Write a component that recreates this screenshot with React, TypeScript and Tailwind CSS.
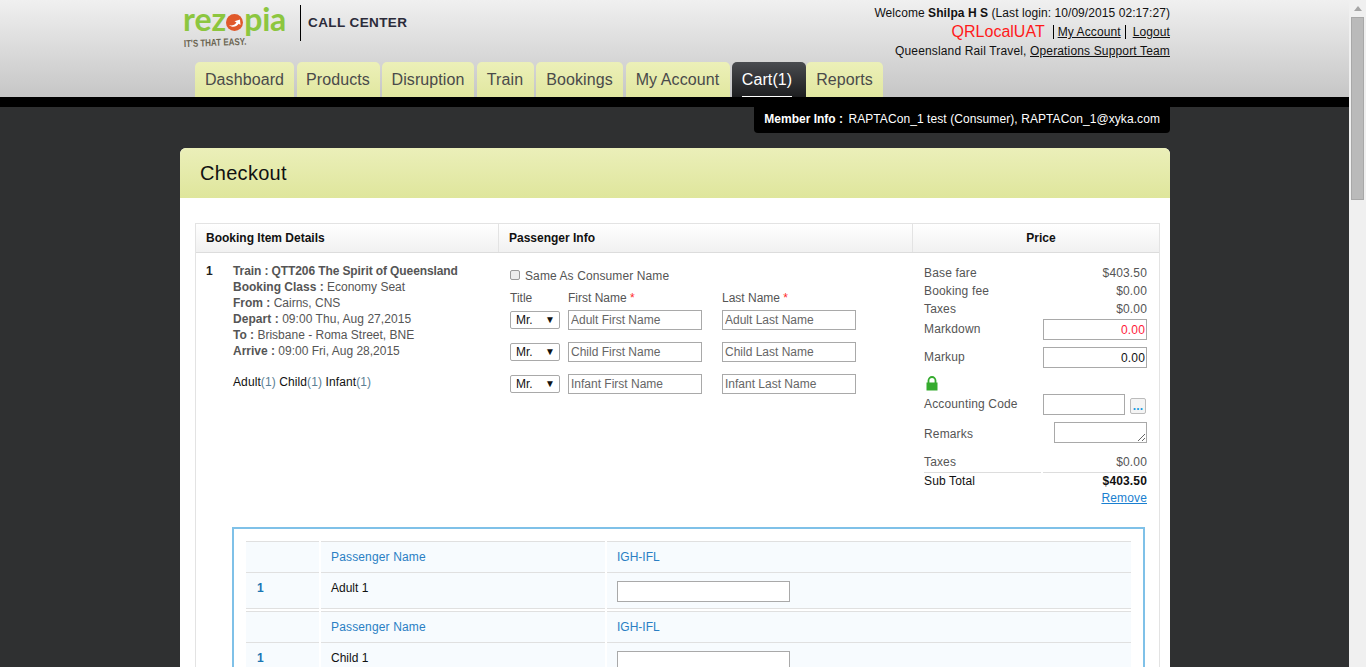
const tabs = [
  { label: "Dashboard", width: "w-[99px]" },
  { label: "Products", width: "w-[83px]" },
  { label: "Disruption", width: "w-[92px]" },
  { label: "Train", width: "w-[57px]" },
  { label: "Bookings", width: "w-[87px]" },
  { label: "My Account", width: "w-[104px]" },
];

function Logo() {
  return (
    <div className="w-[120px] shrink-0 pt-[3px] pl-[3px]">
      <div className="flex items-center h-[32px] font-['Lato',sans-serif] font-bold text-[32px] leading-none text-[#8cc63f]">
        <span>rez</span>
        <svg width="17" height="17" viewBox="0 0 17 17" className="mt-[6px] shrink-0">
          <circle cx="8.5" cy="8.5" r="8.5" fill="#e0592a" />
          <path d="M3 11C5.5 12 9 11 10.5 8.5L8.5 7.2L14 5.5L14.5 11L12.7 9.8C10.5 13 6 14 3 11Z" fill="#fff" />
        </svg>
        <span className="ml-[1px] -tracking-[0.3px]">pia</span>
      </div>
      <div className="mt-[3px] pl-[1px] w-[80px] text-[10px] leading-[12px] font-bold whitespace-nowrap text-[#6b6552] origin-left -rotate-2 scale-x-[0.8]">
        IT'S THAT EASY.
      </div>
    </div>
  );
}

function Header() {
  return (
    <div className="h-[97px] bg-gradient-to-b from-[#f0f0f0] to-[#c6c6c6]">
      <div className="w-[990px] ml-[180px]">
        <div className="flex justify-between h-[62px]">
          <div className="flex">
            <Logo />
            <div className="w-px h-[36px] mt-[5px] bg-black" />
            <div className="ml-[7px] mt-[15px] text-[13.5px] leading-[16px] font-bold tracking-[0.4px] text-[#2b2b3a]">
              CALL CENTER
            </div>
          </div>
          <div className="pt-[5px] text-right text-[12px] text-[#111]">
            <div className="leading-[16px] tracking-[0.07px]">
              Welcome <b>Shilpa H S</b> (Last login: 10/09/2015 02:17:27)
            </div>
            <div className="flex justify-end items-center h-[22px] tracking-[0.1px]">
              <span className="text-[16px] text-[#ff1a1a] mr-[8px] tracking-normal">QRLocalUAT</span>
              <span className="border-l border-black pl-[4px] h-[14px] leading-[15px] underline">My Account</span>
              <span className="border-l border-black ml-[4px] h-[14px] leading-[15px] pl-[7px] underline">Logout</span>
            </div>
            <div className="leading-[16px] tracking-[0.15px]">
              Queensland Rail Travel, <span className="underline">Operations Support Team</span>
            </div>
          </div>
        </div>
        <div className="flex h-[35px] pl-[15px] gap-[2.5px] text-[16px] tracking-[0.1px] text-center">
          {tabs.map((t) => (
            <div
              key={t.label}
              className={`${t.width} pt-[6px] rounded-t-[5px] bg-gradient-to-b from-[#ecf0b8] to-[#e1e7a0] text-[#4a4a4a] whitespace-nowrap`}
            >
              {t.label}
            </div>
          ))}
          <div className="relative w-[74px] pt-[6px] pr-[4px] rounded-t-[5px] bg-gradient-to-b from-[#4a4c50] to-[#1d1e20] text-white whitespace-nowrap">
            Cart(1)
            <div className="absolute left-[10px] right-[14px] bottom-0 h-px bg-white" />
          </div>
          <div className="-ml-[2.5px] w-[77px] pt-[6px] rounded-t-[5px] bg-gradient-to-b from-[#ecf0b8] to-[#e1e7a0] text-[#4a4a4a]">
            Reports
          </div>
        </div>
      </div>
    </div>
  );
}

function NameRow({ who }: { who: string }) {
  return (
    <div className="flex items-center h-[20px] mb-[12px]">
      <div className="flex justify-between items-center w-[50px] h-[18px] pl-[5px] pr-[4px] border border-[#a9a9a9] rounded-[2px] bg-white text-[#111]">
        <span>Mr.</span>
        <span className="text-[10px]">▼</span>
      </div>
      <input
        placeholder={`${who} First Name`}
        className="ml-[8px] w-[134px] h-[20px] px-[2px] border border-[#a9a9a9] text-[12px] placeholder:text-[#666] outline-none"
      />
      <input
        placeholder={`${who} Last Name`}
        className="ml-[20px] w-[134px] h-[20px] px-[2px] border border-[#a9a9a9] text-[12px] placeholder:text-[#666] outline-none"
      />
    </div>
  );
}

function PriceRow({ label, value }: { label: string; value: string }) {
  return (
    <div className="flex justify-between h-[18px] leading-[18px]">
      <span>{label}</span>
      <span>{value}</span>
    </div>
  );
}

function PaxBlock({ name }: { name: string }) {
  return (
    <>
      <div className="flex gap-[2px] h-[32px] leading-[30px] text-[#2a7fc4]">
        <div className="w-[73px] border-y border-[#e0e0e0] bg-[#f7fbfe]" />
        <div className="w-[284px] pl-[10px] border-y border-[#e0e0e0] bg-[#f7fbfe] tracking-[0.15px]">Passenger Name</div>
        <div className="flex-1 pl-[10px] border-y border-[#e0e0e0] bg-[#f7fbfe]">IGH-IFL</div>
      </div>
      <div className="flex gap-[2px] h-[36px] mb-[2px]">
        <div className="w-[73px] pl-[11px] pt-[7px] border-b border-[#e0e0e0] bg-[#f7fbfe] font-bold text-[#1a76b4]">1</div>
        <div className="w-[284px] pl-[10px] pt-[7px] border-b border-[#e0e0e0] bg-[#f7fbfe] text-[#111]">
          {name}
        </div>
        <div className="flex-1 pl-[10px] pt-[8px] border-b border-[#e0e0e0] bg-[#f7fbfe]">
          <input className="block w-[173px] h-[21px] border border-[#a9a9a9] bg-white outline-none" />
        </div>
      </div>
    </>
  );
}

function Checkout() {
  return (
    <div className="rounded-t-[6px] overflow-hidden bg-white">
      <div className="h-[50px] pl-[20px] leading-[50px] text-[20px] tracking-[0.3px] text-[#111] bg-gradient-to-b from-[#ebefb9] to-[#dfe69c]">
        Checkout
      </div>
      <div className="pt-[25px] pl-[15px] pr-[10px] text-[12px] leading-[16px] text-[#555]">
        <div className="border-x border-t border-[#e3e3e3]">
          {/* table head */}
          <div className="flex h-[29px] leading-[28px] font-bold text-[#111] border-b border-[#dcdcdc] bg-gradient-to-b from-white to-[#f1f1f1]">
            <div className="w-[303px] pl-[10px] border-r border-[#e3e3e3]">Booking Item Details</div>
            <div className="w-[414px] pl-[10px] border-r border-[#e3e3e3]">Passenger Info</div>
            <div className="flex-1 pl-[10px] text-center">Price</div>
          </div>

          {/* booking row */}
          <div className="flex h-[274px]">
            <div className="w-[303px] flex pl-[10px] pt-[10px]">
              <b className="w-[27px] text-[#222]">1</b>
              <div>
                <div><b className="-tracking-[0.1px]">Train : QTT206 The Spirit of Queensland</b></div>
                <div><b>Booking Class :</b> Economy Seat</div>
                <div><b>From :</b> Cairns, CNS</div>
                <div className="tracking-[0.05px]"><b>Depart :</b> 09:00 Thu, Aug 27,2015</div>
                <div><b>To :</b> Brisbane - Roma Street, BNE</div>
                <div><b>Arrive :</b> 09:00 Fri, Aug 28,2015</div>
                <div className="mt-[15px] tracking-[0.1px] text-[#111]">
                  Adult<span className="text-[#5b7f95]">(1)</span> Child<span className="text-[#5b7f95]">(1)</span> Infant<span className="text-[#5b7f95]">(1)</span>
                </div>
              </div>
            </div>
            <div className="w-[414px] pl-[11px] pt-[15px]">
              <label className="flex items-center h-[16px] tracking-[0.1px]">
                <input
                  type="checkbox"
                  className="appearance-none w-[10px] h-[10px] mr-[5px] -mt-[3px] bg-[#ececec] border border-[#999] rounded-[2px]"
                />
                Same As Consumer Name
              </label>
              <div className="flex mt-[6px] h-[16px] mb-[4px]">
                <span className="w-[58px]">Title</span>
                <span className="w-[154px]">First Name <span className="text-[#ff2a2a]">*</span></span>
                <span>Last Name <span className="text-[#ff2a2a]">*</span></span>
              </div>
              <NameRow who="Adult" />
              <NameRow who="Child" />
              <NameRow who="Infant" />
            </div>
            <div className="flex-1 pl-[11px] pr-[12px] pt-[11px] tracking-[0.15px]">
              <PriceRow label="Base fare" value="$403.50" />
              <PriceRow label="Booking fee" value="$0.00" />
              <PriceRow label="Taxes" value="$0.00" />
              <div className="flex justify-between h-[21px] mt-[1px] leading-[20px]">
                <span>Markdown</span>
                <input defaultValue="0.00" className="w-[104px] h-[21px] px-[1px] border border-[#a9a9a9] text-right text-[#ff1a3a] outline-none" />
              </div>
              <div className="flex justify-between h-[21px] mt-[7px] leading-[20px]">
                <span>Markup</span>
                <input defaultValue="0.00" className="w-[104px] h-[21px] px-[1px] border border-[#a9a9a9] text-right text-[#111] outline-none" />
              </div>
              <div className="h-[26px] pl-[2px] pt-[8px]">
                <svg width="12" height="15" viewBox="0 0 12 15" className="block">
                  <path d="M2.5 7V4.5a3.5 3.5 0 0 1 7 0V7" fill="none" stroke="#35ab2e" strokeWidth="1.8" />
                  <rect x="0.5" y="6.5" width="11" height="8" fill="#35ab2e" />
                </svg>
              </div>
              <div className="flex h-[21px] leading-[20px]">
                <span className="w-[119px]">Accounting Code</span>
                <input className="w-[82px] h-[21px] border border-[#a9a9a9] outline-none" />
                <div className="ml-[5px] mt-[4px] w-[16px] h-[16px] border border-[#bbb] rounded-[2px] bg-[#f4f4f4] text-center text-[#1a9ae0] font-bold leading-[14px]">
                  ...
                </div>
              </div>
              <div className="flex justify-between h-[21px] mt-[7px] leading-[24px]">
                <span>Remarks</span>
                <textarea className="block w-[93px] h-[21px] border border-[#a9a9a9] outline-none" />
              </div>
              <div className="mt-[10px]">
                <PriceRow label="Taxes" value="$0.00" />
              </div>
              <div className="flex h-px gap-[2px] mt-[1px]">
                <div className="w-[117px] bg-[#ddd]" />
                <div className="flex-1 bg-[#ddd]" />
              </div>
              <div className="flex justify-between h-[16px] leading-[16px] text-[#111]">
                <span>Sub Total</span>
                <b>$403.50</b>
              </div>
              <div className="text-right leading-[18px] text-[#1a7fd0] underline">Remove</div>
            </div>
          </div>

          {/* passenger panel */}
          <div className="ml-[36px] mr-[14px] border-2 border-b-0 border-[#7fc1e8] px-[12px] pt-[12px] h-[200px]">
            <PaxBlock name="Adult 1" />
            <PaxBlock name="Child 1" />
          </div>
        </div>
      </div>
    </div>
  );
}

export default function App() {
  return (
    <div className="flex h-[667px] overflow-hidden font-['Liberation_Sans',Arial,sans-serif] bg-[#2f3031]">
      <div className="w-[1349px] shrink-0">
        <Header />
        <div className="h-[10px] bg-black" />
        <div className="w-[990px] ml-[180px]">
          <div className="flex justify-end">
            <div className="h-[26px] pl-[10px] pr-[10px] leading-[25px] text-[12px] tracking-[0.08px] text-white bg-black rounded-b-[4px]">
              <b className="mr-[2px] tracking-normal">Member Info :</b> RAPTACon_1 test (Consumer), RAPTACon_1@xyka.com
            </div>
          </div>
          <div className="mt-[15px]">
            <Checkout />
          </div>
        </div>
      </div>
      {/* window scrollbar */}
      <div className="w-[17px] bg-[#f0f0f0] pt-[6px] flex flex-col items-center">
        <div className="w-0 h-0 border-x-[4px] border-x-transparent border-b-[5px] border-b-[#a6a6a6]" />
        <div className="mt-[6px] w-[13px] h-[183px] bg-[#bababa] border border-[#a8a8a8]" />
      </div>
    </div>
  );
}
